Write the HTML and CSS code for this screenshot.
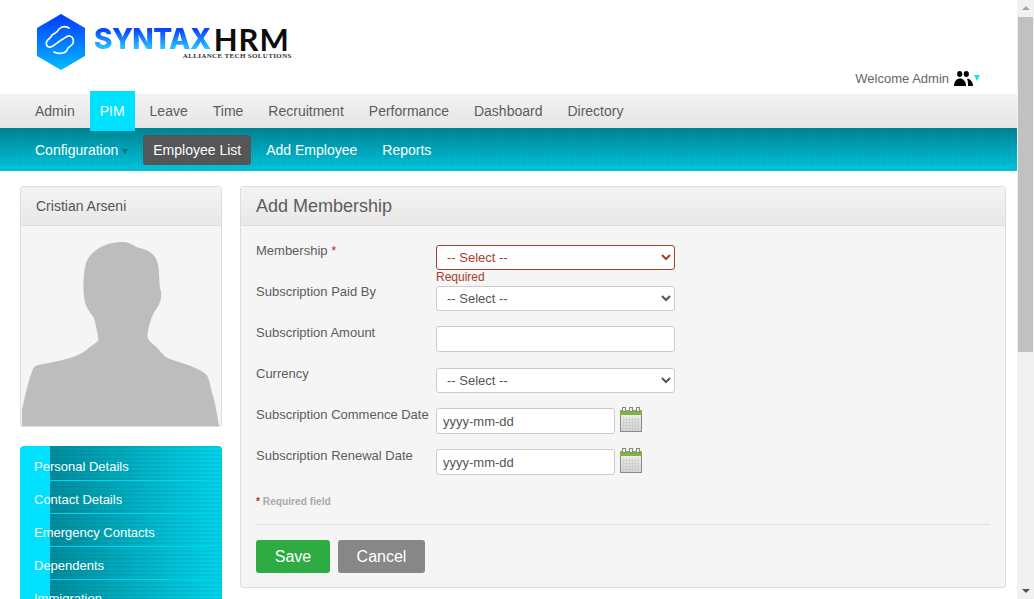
FILE: index.html
```html
<!DOCTYPE html>
<html lang="en">
<head>
    <meta charset="UTF-8">
    <meta name="viewport" content="width=device-width, initial-scale=1.0">
    <title>Add Membership</title>
    <link rel="stylesheet" href="styles.css">
</head>
<body>
    <svg class="defs" width="0" height="0">
        <defs>
            <linearGradient id="calFill" x1="0" y1="0" x2="0" y2="1">
                <stop offset="0" stop-color="#f4f4f4"/>
                <stop offset="1" stop-color="#d2d2d2"/>
            </linearGradient>
            <pattern id="calGrid" width="3" height="3" patternUnits="userSpaceOnUse">
                <path d="M0 0H3M0 0V3" stroke="#c4c4c4" stroke-width="1" fill="none"/>
            </pattern>
            <g id="calIcon">
                <rect x="0.5" y="3.5" width="21" height="21" fill="url(#calFill)" stroke="#8a8a8a"/>
                <rect x="3" y="10" width="16" height="13" fill="url(#calGrid)"/>
                <rect x="0" y="3" width="22" height="5" fill="#84b23e"/>
                <rect x="2.5" y="0.5" width="3" height="4" fill="#eee" stroke="#888"/>
                <rect x="9.5" y="0.5" width="3" height="4" fill="#eee" stroke="#888"/>
                <rect x="16.5" y="0.5" width="3" height="4" fill="#eee" stroke="#888"/>
            </g>
        </defs>
    </svg>

    <div class="page">
        <header class="top">
            <a class="logo" href="#">
                <svg class="logo-mark" width="50" height="58" viewBox="0 0 50 58">
                    <defs>
                        <linearGradient id="hexFill" x1="0" y1="0" x2="0" y2="1">
                            <stop offset="0" stop-color="#0438ff"/>
                            <stop offset="1" stop-color="#02bcff"/>
                        </linearGradient>
                    </defs>
                    <path d="M25 1 L49 15 V43 L25 57 L1 43 V15 Z" fill="url(#hexFill)"/>
                    <path d="M33 15 C29 13 25 14 23 16 C22 19 19 20 16 22 C15 25 12 26 11 28 C9 31 11 35 15 34 C18 33 23 28 27 26 C30 24 32 22 34 23 C37 24 38 27 37 30 C36 33 34 33 32 35 C31 38 29 40 26 40 C23 41 20 40 18 39" fill="none" stroke="#fff" stroke-width="1.7" stroke-linecap="round" stroke-linejoin="round"/>
                </svg>
                <span class="logo-text">
                    <span class="logo-name"><span class="logo-syntax">SYNTAX</span><span class="logo-hrm">HRM</span></span>
                    <span class="logo-sub">ALLIANCE TECH SOLUTIONS</span>
                </span>
            </a>
            <div class="welcome">
                <span>Welcome Admin</span>
                <svg class="people" width="19" height="15" viewBox="0 0 19 15">
                    <ellipse cx="5.7" cy="3" rx="2.6" ry="3"/>
                    <ellipse cx="12.3" cy="3" rx="2.6" ry="3"/>
                    <path d="M0 15 C0 10 3 7.5 6 7.5 C9 7.5 12 10 12 15 Z"/>
                    <path d="M13 7.8 C16 7.8 19 10.5 19 15 H14 C14 12 14 10 13 7.8 Z"/>
                </svg>
                <span class="caret-cyan"></span>
            </div>
        </header>

        <nav class="main-nav">
            <a href="#">Admin</a>
            <a href="#" class="current">PIM</a>
            <a href="#">Leave</a>
            <a href="#">Time</a>
            <a href="#">Recruitment</a>
            <a href="#">Performance</a>
            <a href="#">Dashboard</a>
            <a href="#">Directory</a>
        </nav>

        <nav class="sub-nav">
            <a href="#">Configuration<span class="caret-dark"></span></a>
            <a href="#" class="current">Employee List</a>
            <a href="#">Add Employee</a>
            <a href="#">Reports</a>
        </nav>

        <div class="content">
            <aside class="sidebar">
                <div class="profile">
                    <div class="profile-name">Cristian Arseni</div>
                    <div class="profile-pic">
                        <svg width="200" height="200" viewBox="63 138 600 600">
                            <path fill="#bdbdbd" d="M66 738 L66 690 C75 650 85 600 100 565 C105 555 115 555 130 552 C170 543 230 535 260 510 C270 498 290 490 295 480 C295 465 288 440 282 415 C275 400 255 385 252 350 C248 320 250 280 258 250 C270 210 320 185 370 186 C395 188 400 198 415 203 C450 210 470 225 475 260 C478 280 478 310 480 325 C487 340 485 365 470 385 C455 405 445 440 442 465 C442 480 455 490 465 497 C480 510 490 530 510 537 C550 550 600 565 620 585 C630 600 630 620 640 650 C648 680 652 710 657 738 Z"/>
                        </svg>
                    </div>
                </div>
                <ul class="side-menu">
                    <li><a href="#">Personal Details</a></li>
                    <li><a href="#">Contact Details</a></li>
                    <li><a href="#">Emergency Contacts</a></li>
                    <li><a href="#">Dependents</a></li>
                    <li><a href="#">Immigration</a></li>
                </ul>
            </aside>

            <main class="panel">
                <h1 class="panel-head">Add Membership</h1>
                <form class="panel-body">
                    <div class="row">
                        <label>Membership <span class="star">*</span></label>
                        <div class="field">
                            <select class="ctl error"><option>-- Select --</option></select>
                            <span class="error-msg">Required</span>
                        </div>
                    </div>
                    <div class="row">
                        <label>Subscription Paid By</label>
                        <div class="field"><select class="ctl"><option>-- Select --</option></select></div>
                    </div>
                    <div class="row">
                        <label>Subscription Amount</label>
                        <div class="field"><input class="ctl tall" type="text"></div>
                    </div>
                    <div class="row">
                        <label>Currency</label>
                        <div class="field"><select class="ctl"><option>-- Select --</option></select></div>
                    </div>
                    <div class="row">
                        <label>Subscription Commence Date</label>
                        <div class="field date-field">
                            <input class="ctl tall date" type="text" value="yyyy-mm-dd">
                            <svg class="calendar" width="22" height="25" viewBox="0 0 22 25"><use href="#calIcon"/></svg>
                        </div>
                    </div>
                    <div class="row">
                        <label>Subscription Renewal Date</label>
                        <div class="field date-field">
                            <input class="ctl tall date" type="text" value="yyyy-mm-dd">
                            <svg class="calendar" width="22" height="25" viewBox="0 0 22 25"><use href="#calIcon"/></svg>
                        </div>
                    </div>
                    <p class="req-note"><span class="star">*</span> Required field</p>
                    <hr class="rule">
                    <div class="actions">
                        <button type="button" class="btn btn-save">Save</button>
                        <button type="button" class="btn btn-cancel">Cancel</button>
                    </div>
                </form>
            </main>
        </div>
    </div>

    <div class="scrollbar">
        <span class="arrow-up"></span>
        <span class="thumb"></span>
        <span class="arrow-down"></span>
    </div>
</body>
</html>
```

FILE: styles.css
```css
html, body {
    height: 100%;
}
body {
    margin: 0;
    display: flex;
    overflow: hidden;
    background-color: #fff;
    color: #555;
    font-family: "Liberation Sans", Arial, sans-serif;
    font-size: 14px;
}
a {
    color: inherit;
    text-decoration: none;
}
.defs {
    position: absolute;
}

.page {
    flex: 1;
    min-width: 0;
    height: 599px;
    overflow: hidden;
}

/* header */
.top {
    display: flex;
    justify-content: space-between;
    height: 94px;
    padding: 13px 37px 0 36px;
    box-sizing: border-box;
}
.logo {
    display: flex;
    align-items: flex-start;
    gap: 8px;
    height: 58px;
}
.logo-text {
    display: flex;
    flex-direction: column;
    margin-top: 13px;
}
.logo-name {
    display: flex;
    font-family: "Inter", "Lato", sans-serif;
    line-height: 26px;
    height: 26px;
    gap: 3px;
}
.logo-syntax {
    font-size: 28px;
    font-weight: 800;
    letter-spacing: -0.6px;
    background: linear-gradient(#0b45ff 15%, #27c4ff 85%);
    -webkit-background-clip: text;
    background-clip: text;
    color: transparent;
}
.logo-hrm {
    font-family: "Lato", sans-serif;
    font-size: 31px;
    font-weight: 700;
    letter-spacing: 1px;
    color: #0c0c0c;
}
.logo-sub {
    align-self: flex-end;
    margin-right: -2px;
    font-family: "Liberation Serif", serif;
    font-size: 7px;
    font-weight: bold;
    letter-spacing: 0.35px;
    color: #333;
    line-height: 8px;
}
.welcome {
    display: flex;
    align-items: center;
    align-self: flex-end;
    margin-bottom: 8px;
    font-size: 13px;
    color: #666;
}
.people {
    margin-left: 5px;
}
.caret-cyan {
    width: 0;
    height: 0;
    margin-left: 1px;
    margin-top: -1px;
    border-left: 3px solid transparent;
    border-right: 3px solid transparent;
    border-top: 6px solid #19dcf5;
}

/* main nav */
.main-nav {
    display: flex;
    height: 34px;
    padding-left: 25px;
    background: linear-gradient(#f3f3f3, #e5e5e5);
}
.main-nav a {
    padding: 0 10px;
    margin-right: 5px;
    line-height: 34px;
    color: #5c5c5c;
}
.main-nav a.current {
    height: 40px;
    margin-top: -3px;
    line-height: 40px;
    background-color: #00e1ff;
    color: #fff;
    position: relative;
    z-index: 1;
}

/* sub nav */
.sub-nav {
    display: flex;
    align-items: center;
    gap: 5px;
    height: 43px;
    padding: 0 0 2px 25px;
    box-sizing: border-box;
    border-top: 3px solid #008391;
    background:
        repeating-linear-gradient(90deg, rgba(0, 0, 0, 0.04) 0 1px, transparent 1px 3px),
        linear-gradient(#00899a, #00c6de);
}
.sub-nav a {
    padding: 0 10px;
    height: 30px;
    line-height: 30px;
    border-radius: 3px;
    color: #fff;
}
.sub-nav a.current {
    background-color: #555657;
}
.caret-dark {
    display: inline-block;
    margin-left: 4px;
    vertical-align: 1px;
    border-left: 3px solid transparent;
    border-right: 3px solid transparent;
    border-top: 5px solid #08707e;
}

/* content */
.content {
    display: flex;
    align-items: flex-start;
    gap: 18px;
    padding: 15px 11px 0 20px;
}
.sidebar {
    width: 202px;
    flex-shrink: 0;
}
.profile {
    border: 1px solid #ddd;
    border-radius: 3px;
    background-color: #f5f5f5;
}
.profile-name {
    height: 38px;
    line-height: 38px;
    padding-left: 15px;
    border-bottom: 1px solid #ddd;
    background: linear-gradient(#f3f3f3, #e8e8e8);
}
.profile-pic {
    height: 200px;
}
.profile-pic svg {
    display: block;
}
.side-menu {
    list-style: none;
    margin: 19px 0 0;
    padding: 2px 0 0 30px;
    border-radius: 4px 4px 0 0;
    background:
        repeating-linear-gradient(180deg, rgba(0, 0, 0, 0.05) 0 2px, transparent 2px 4px) 30px 0 no-repeat,
        linear-gradient(90deg, #00e1ff 0 30px, #008c9d 30px, #00d4ec 100%);
}
.side-menu li {
    height: 33px;
    position: relative;
}
.side-menu li::after {
    content: "";
    position: absolute;
    left: 0;
    right: 8px;
    bottom: 0;
    height: 1px;
    background-color: #00d6f0;
}
.side-menu a {
    display: block;
    margin-left: -16px;
    line-height: 38px;
    font-size: 13px;
    color: #fff;
}

/* panel */
.panel {
    flex: 1;
    border: 1px solid #ddd;
    border-radius: 3px;
    background-color: #f5f5f5;
}
.panel-head {
    margin: 0;
    height: 38px;
    line-height: 38px;
    padding-left: 15px;
    border-bottom: 1px solid #ddd;
    background: linear-gradient(#f3f3f3, #e8e8e8);
    font-size: 18px;
    font-weight: normal;
    color: #5c5c5c;
}
.panel-body {
    padding: 18px 15px 14px;
}
.row {
    display: flex;
    height: 41px;
}
.row label {
    width: 180px;
    flex-shrink: 0;
    line-height: 14px;
    font-size: 13px;
    color: #5c5c5c;
}
.star {
    color: #a5402b;
}
.field {
    position: relative;
}
.date-field {
    display: flex;
    align-items: flex-start;
    gap: 5px;
}
.ctl {
    display: block;
    width: 239px;
    height: 25px;
    box-sizing: border-box;
    padding: 0 6px;
    border: 1px solid #ccc;
    border-radius: 3px;
    background-color: #fff;
    color: #555;
    font-family: inherit;
    font-size: 13px;
}
select.ctl {
    margin-top: 1px;
}
.ctl.tall {
    height: 26px;
}
.ctl.date {
    width: 179px;
}
.ctl.error {
    border-color: #a5402b;
    color: #a5402b;
}
.calendar {
    display: block;
    margin-top: -1px;
}
.error-msg {
    position: absolute;
    left: 0;
    top: 26px;
    font-size: 12px;
    line-height: 14px;
    color: #a5402b;
}
.req-note {
    margin: 0;
    padding-top: 5px;
    font-size: 10.2px;
    font-weight: bold;
    line-height: 14px;
    color: #aaa;
}
.rule {
    margin: 15px 0 15px;
    border: 0;
    border-top: 1px solid #ddd;
}
.actions {
    display: flex;
    gap: 8px;
}
.btn {
    height: 33px;
    border: 0;
    border-radius: 3px;
    color: #fff;
    font-family: inherit;
    font-size: 16px;
}
.btn-save {
    width: 74px;
    background-color: #2eac43;
}
.btn-cancel {
    width: 87px;
    background-color: #878787;
}

/* painted scrollbar, the page itself does not scroll here */
.scrollbar {
    display: flex;
    flex-direction: column;
    align-items: center;
    width: 17px;
    height: 599px;
    flex-shrink: 0;
    background-color: #f1f1f1;
}
.arrow-up, .arrow-down {
    width: 0;
    height: 0;
    border-left: 4px solid transparent;
    border-right: 4px solid transparent;
}
.arrow-up {
    margin: 6px 0 7px;
    border-bottom: 4px solid #a3a3a3;
}
.thumb {
    width: 15px;
    height: 335px;
    background-color: #c1c1c1;
}
.arrow-down {
    margin-top: auto;
    margin-bottom: 6px;
    border-top: 4px solid #505050;
}
```
